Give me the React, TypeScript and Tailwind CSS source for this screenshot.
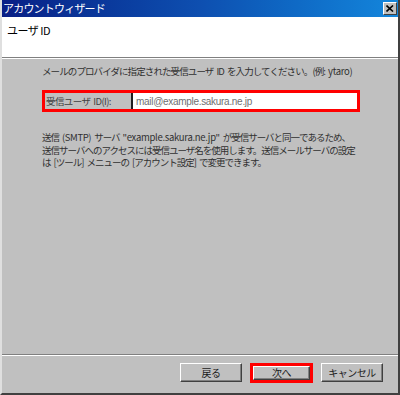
import React from "react";

const jp = { fontFamily: '"Noto Sans CJK JP", "Noto Sans", sans-serif' };
const bevel =
  "bg-[#c0c0c0] border border-t-white border-l-white border-r-[#404040] border-b-[#404040] shadow-[inset_-1px_-1px_0_#808080]";

function WinButton({ label, focused }: { label: string; focused?: boolean }) {
  return (
    <div
      className={
        focused
          ? "w-[63px] h-[20px] border-[3px] border-[#ff0000] flex"
          : "w-[62px] h-[19px] flex"
      }
    >
      <div
        className={`flex-1 ${bevel} flex items-center justify-center text-[10px] text-[#202020] leading-none tracking-[-0.5px]`}
      >
        {label}
      </div>
    </div>
  );
}

// gap that survives the tight letter-spacing
function Sp() {
  return <span className="inline-block w-[3px]" />;
}

export default function App() {
  return (
    <div
      className="w-[400px] h-[395px] bg-[#c0c0c0] flex flex-col border-l-2 border-l-[#dfdfdf] border-r-2 border-r-[#404040] border-b-2 border-b-[#404040]"
      style={jp}
    >
      {/* title bar */}
      <div className="h-[17px] shrink-0 bg-gradient-to-r from-[#0a1f86] via-[#0e4fb0] to-[#1486dc] flex items-center justify-between pl-[1px] pr-[1px]">
        <span className="text-white text-[11px] leading-none tracking-[-0.8px]">アカウントウィザード</span>
        <div className="w-[14px] h-[13px] bg-[#c0c0c0] border border-t-white border-l-white border-r-[#404040] border-b-[#404040] flex items-center justify-center">
          <svg width="8" height="7" viewBox="0 0 8 7">
            <path d="M0.5 0.5 L7 6.5 M7 0.5 L0.5 6.5" stroke="#000" strokeWidth="1.6" />
          </svg>
        </div>
      </div>

      {/* header */}
      <div className="h-[41px] shrink-0 bg-white pl-[5px] pt-[8px] border-b border-b-[#808080]">
        <p className="text-[11px] text-black leading-none tracking-[-0.5px]">ユーザ ID</p>
      </div>
      <div className="h-px bg-white shrink-0" />

      {/* body */}
      <div className="flex-1 flex flex-col pl-[40px] pt-[5px]">
        <p className="text-[9.5px] leading-[14px] text-[#303030] whitespace-nowrap tracking-[-0.9px]">
          メールのプロバイダに指定された受信ユーザ<Sp />ID<Sp />を入力してください。(例:<Sp />
          <span className="tracking-[-0.3px]">ytaro</span>)
        </p>
        <div className="mt-[12px] h-[22px] w-[318px] border-[3px] border-[#ff0000] flex items-stretch">
          <div className="w-[86px] shrink-0 flex items-center pl-[1px] text-[9.5px] text-[#404040] tracking-[-0.6px]">
            受信ユーザ<Sp />ID(I):
          </div>
          <div
            className="flex-1 bg-white border-l-2 border-l-[#202020] flex items-center pl-[3px] text-[10px] text-[#707070] tracking-[-0.3px]"
            style={{ fontFamily: '"Liberation Sans", Arial, sans-serif' }}
          >
            mail@example.sakura.ne.jp
          </div>
        </div>
        <p className="mt-[19px] text-[9.5px] leading-[12.5px] text-[#303030] whitespace-nowrap tracking-[-1px]">
          送信<Sp /><span className="tracking-[-0.4px]">(SMTP)</span><Sp />サーバ<Sp />
          <span className="tracking-[-0.3px]">"example.sakura.ne.jp"</span><Sp />が受信サーバと同一であるため、
          <br />
          送信サーバへのアクセスには受信ユーザ名を使用します。送信メールサーバの設定
          <br />
          は<Sp />[ツール]<Sp />メニューの<Sp />[アカウント設定]<Sp />で変更できます。
        </p>
      </div>

      {/* footer */}
      <div className="h-px bg-[#808080] shrink-0" />
      <div className="h-px bg-white shrink-0" />
      <div className="h-[37px] shrink-0 flex items-start justify-end pr-[15px] pt-[7px] gap-[8px]">
        <WinButton label="戻る" />
        <WinButton label="次へ" focused />
        <WinButton label="キャンセル" />
      </div>
    </div>
  );
}
